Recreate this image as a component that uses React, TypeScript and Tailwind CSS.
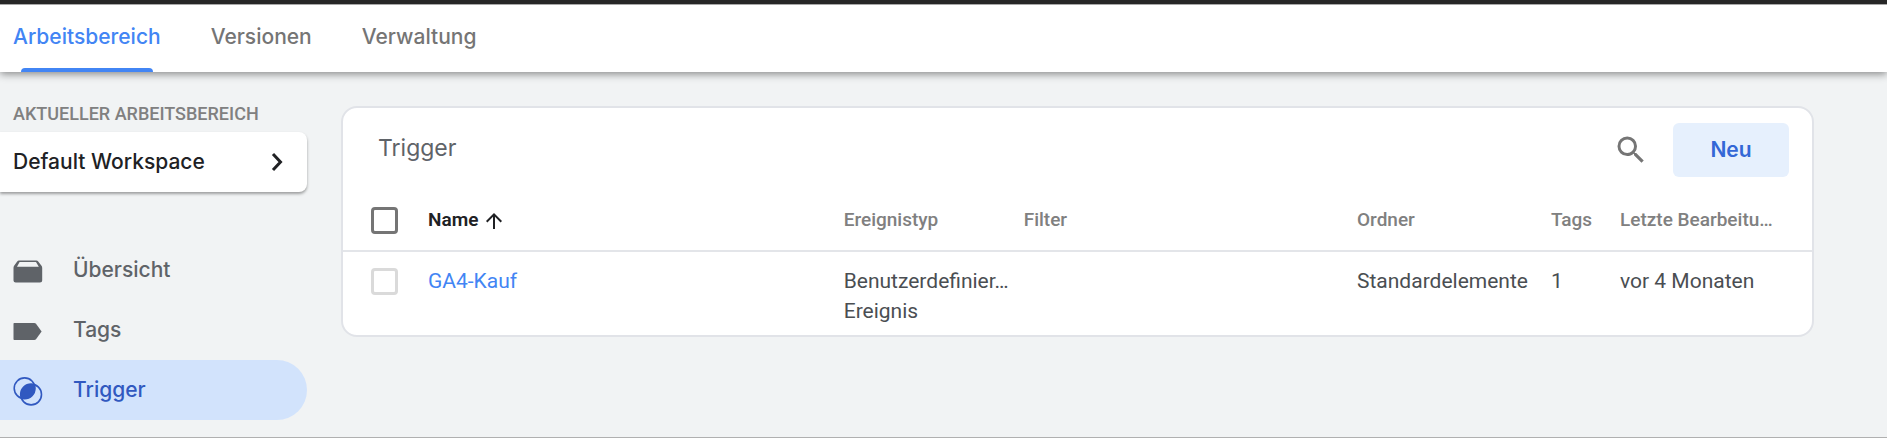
import { MdArrowUpward, MdSearch } from "react-icons/md";

const tabs = ["Arbeitsbereich", "Versionen", "Verwaltung"];

const navItems = [
  { label: "Übersicht", icon: OverviewIcon },
  { label: "Tags", icon: TagIcon },
  { label: "Trigger", icon: TriggerIcon },
];

const triggers = [
  {
    name: "GA4-Kauf",
    type: ["Benutzerdefinier…", "Ereignis"],
    filter: "",
    folder: "Standardelemente",
    tags: 1,
    edited: "vor 4 Monaten",
  },
];

function OverviewIcon() {
  return (
    <svg viewBox="0 0 30 30" className="size-[30px]" fill="currentColor">
      <path d="M0.5 13 Q0.5 11.8 1.1 10.8 L4.2 6.4 Q4.9 5.5 6 5.5 H23.4 Q24.5 5.5 25.2 6.4 L28.5 10.8 Q29.2 11.8 29.2 13 V25.4 Q29.2 27.5 27 27.5 H2.7 Q0.5 27.5 0.5 25.4 Z M6.6 7 L4 11.7 H25.8 L23 7 Z" fillRule="evenodd" />
    </svg>
  );
}

function TagIcon() {
  return (
    <svg viewBox="0 0 30 30" className="size-[30px]" fill="currentColor">
      <path d="M1.2 8 H21.3 Q22.3 8 23 8.8 L28.6 16.5 L23 24.2 Q22.3 25 21.3 25 H1.2 Q0.5 25 0.5 24.2 V8.8 Q0.5 8 1.2 8 Z" />
    </svg>
  );
}

function TriggerIcon() {
  return (
    <svg viewBox="0 0 31 31" className="-mr-px size-[31px]" fill="none">
      <circle cx="11.6" cy="13.3" r="10.4" stroke="currentColor" strokeWidth="1.6" />
      <circle cx="18.1" cy="19.5" r="10.4" stroke="currentColor" strokeWidth="1.6" />
      <path d="M21.3 9.6 A10.4 10.4 0 0 1 8.4 23.2 A10.4 10.4 0 0 1 21.3 9.6 Z" fill="currentColor" />
    </svg>
  );
}

function Header() {
  return (
    <header className="relative border-t-4 border-[#262626] bg-white shadow-[0_2px_8px_rgba(0,0,0,0.45)]">
      <nav className="flex h-[68px] gap-[50px] border-t border-[#a8a8a8] px-[13px] text-[21px] font-medium">
        {tabs.map((tab, i) => (
          <a
            key={tab}
            href="#"
            className={
              i === 0
                ? "flex flex-col justify-between pt-4 text-[#4285f4]"
                : "pt-4 text-[#757575]"
            }
          >
            <span className="leading-8">{tab}</span>
            {i === 0 && <span className="mx-2 h-1 rounded-t bg-[#4285f4]" />}
          </a>
        ))}
      </nav>
    </header>
  );
}

function Sidebar() {
  return (
    <aside className="w-[307px] shrink-0 pt-[30px]">
      <h2 className="px-[13px] font-[Roboto,sans-serif] text-[18px] leading-6 font-medium text-[#808080]">
        AKTUELLER ARBEITSBEREICH
      </h2>
      <button className="mt-[6px] flex h-[60px] w-full items-center justify-between rounded-r-lg bg-white pr-5 pl-[13px] text-[21px] font-medium text-[#202124] shadow-[0_2px_3px_rgba(0,0,0,0.35)]">
        Default Workspace
        <svg viewBox="0 0 20 20" className="size-5" fill="none" stroke="currentColor" strokeWidth="3">
          <path d="M6 2 L13.5 10 L6 18" />
        </svg>
      </button>
      <nav className="mt-12">
        {navItems.map(({ label, icon: Icon }) => (
          <a
            key={label}
            href="#"
            className={
              label === "Trigger"
                ? "flex h-[60px] items-center gap-[30px] rounded-r-full bg-[#d2e3fc] pl-[13px] text-[21px] font-medium text-[#3159c0]"
                : "flex h-[60px] items-center gap-[30px] pl-[13px] text-[21px] font-medium text-[#5f6368]"
            }
          >
            <Icon />
            {label}
          </a>
        ))}
      </nav>
    </aside>
  );
}

function TriggerTable() {
  return (
    <table className="w-full table-fixed text-left font-[Roboto,sans-serif] text-[#4a4e52]">
      <colgroup>
        <col className="w-[85px]" />
        <col className="w-[28.3%]" />
        <col className="w-[180px]" />
        <col />
        <col className="w-[194px]" />
        <col className="w-[69px]" />
        <col className="w-[192px]" />
      </colgroup>
      <thead>
        <tr className="h-[60px] border-b-2 border-[#e3e5e9] text-[19px] text-[#808080] [&>th]:font-medium">
          <th className="pl-7">
            <input
              type="checkbox"
              aria-label="Alle auswählen"
              className="block size-[27px] appearance-none rounded border-3 border-[#757575]"
            />
          </th>
          <th aria-sort="ascending" className="text-[#202124]">
            <button className="flex items-center gap-1 font-semibold">
              Name
              <MdArrowUpward className="size-6" />
            </button>
          </th>
          <th>Ereignistyp</th>
          <th>Filter</th>
          <th>Ordner</th>
          <th>Tags</th>
          <th className="whitespace-nowrap">Letzte Bearbeitu…</th>
        </tr>
      </thead>
      <tbody>
        {triggers.map((t) => (
          <tr key={t.name} className="align-top text-[21px] leading-[30px] [&>td]:pt-[14px] [&>td]:pb-[9px]">
            <td className="pl-7">
              <input
                type="checkbox"
                aria-label={t.name}
                className="mt-[2px] block size-[27px] appearance-none rounded border-3 border-[#dadada]"
              />
            </td>
            <td>
              <a href="#" className="text-[#4285f4]">{t.name}</a>
            </td>
            <td className="whitespace-nowrap">
              {t.type.map((line) => (
                <div key={line}>{line}</div>
              ))}
            </td>
            <td>{t.filter}</td>
            <td>{t.folder}</td>
            <td>{t.tags}</td>
            <td>{t.edited}</td>
          </tr>
        ))}
      </tbody>
    </table>
  );
}

export default function App() {
  return (
    <div className="flex min-h-screen flex-col border-b border-[#b0b0b0] bg-[#f1f3f4] font-[Inter,sans-serif]">
      <Header />
      <div className="flex flex-1 items-start">
        <Sidebar />
        <main className="mt-[34px] mr-[73px] ml-[34px] min-w-0 flex-1 rounded-2xl border-2 border-[#e1e3e8] bg-white">
          <div className="flex h-[83px] items-center pr-[23px] pl-[35px]">
            <h1 className="flex-1 pb-1 text-[23px] leading-8 text-[#5f6368]">Trigger</h1>
            <button aria-label="Suchen" className="mr-6 text-[#757575]">
              <MdSearch className="size-9" />
            </button>
            <button className="h-[54px] w-[116px] rounded-md bg-[#e6f0fd] text-[21px] font-semibold text-[#3367d6]">
              Neu
            </button>
          </div>
          <TriggerTable />
        </main>
      </div>
    </div>
  );
}
